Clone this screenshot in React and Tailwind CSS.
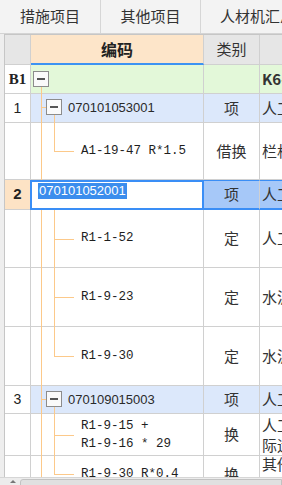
import React from 'react';

// 表格线与树线颜色
const grid = 'border-[#d0d0d0]';
const cjk = "font-['Noto_Sans_CJK_SC',sans-serif]";
const mono = "font-['Liberation_Mono','Noto_Sans_CJK_SC',monospace]";
const sans = "font-['Liberation_Sans','Noto_Sans_CJK_SC',sans-serif]";
const serif = "font-['Liberation_Serif','Noto_Sans_CJK_SC',serif]";

function Box({ className }) {
  return (
    <span className={`absolute w-[16px] h-[16px] border border-[#8c8c8c] bg-[#fafafa] flex items-center justify-center ${className}`}>
      <span className="w-[8px] h-[2px] bg-[#555]" />
    </span>
  );
}

function Line({ className }) {
  return <span className={`absolute bg-[#fcc98a] ${className}`} />;
}

function Row({ h, bg, head, headCls = '', code, codeCls = '', tree, type, typeCls = '', last, lastCls = '' }) {
  return (
    <div className={`flex shrink-0 ${h}`}>
      <div className={`w-[26px] shrink-0 border-r border-b ${grid} flex items-center justify-center text-[#222] ${headCls}`}>
        {head}
      </div>
      <div className={`relative w-[173px] shrink-0 border-r border-b ${grid} flex items-center ${bg} ${codeCls}`}>
        {tree}
        {code}
      </div>
      <div className={`w-[56px] shrink-0 border-r border-b ${grid} flex items-center justify-center text-[15px] text-[#333] ${cjk} ${bg} ${typeCls}`}>
        {type}
      </div>
      <div className={`flex-1 min-w-0 overflow-hidden border-b ${grid} flex items-center pl-[2px] whitespace-nowrap text-[15px] text-[#333] ${cjk} ${bg} ${lastCls}`}>
        {last}
      </div>
    </div>
  );
}

// 子目行的树线：├ 或 └
function SubTree({ end }) {
  return (
    <>
      <Line className="left-[10px] w-px top-0 bottom-[-1px]" />
      <Line className={end ? 'left-[23px] w-px top-0 h-1/2' : 'left-[23px] w-px top-0 bottom-[-1px]'} />
      <Line className="left-[23px] w-[20px] h-px top-1/2" />
    </>
  );
}

function ItemTree() {
  return (
    <>
      <Line className="left-[10px] w-px top-0 bottom-[-1px]" />
      <Line className="left-[10px] w-[5px] h-px top-[13px]" />
      <Box className="left-[15px] top-[5px]" />
      <Line className="left-[23px] w-px top-[21px] bottom-[-1px]" />
    </>
  );
}

const subCode = `pl-[50px] text-[12.5px] text-[#1e1e1e] ${mono}`;
const itemCode = `pl-[37px] text-[13px] text-[#2a2a2a] ${sans}`;

export default function App() {
  return (
    <div className="w-[282px] h-[485px] overflow-hidden bg-[#eeeeee] flex flex-col">
      {/* 页签 */}
      <div className={`h-[34px] shrink-0 flex bg-[#f3f3f3] border-b border-[#d4d4d4] text-[15px] text-[#333] ${cjk}`}>
        <div className="w-[101px] shrink-0 border-r border-[#d6d6d6] flex items-center justify-center">措施项目</div>
        <div className="w-[100px] shrink-0 border-r border-[#d6d6d6] flex items-center justify-center">其他项目</div>
        <div className="flex-1 min-w-0 overflow-hidden whitespace-nowrap flex items-center pl-[19px]">人材机汇总</div>
      </div>

      {/* 表格 */}
      <div className="ml-[4px] border-l border-t border-[#c6c6c6] flex-1 min-h-0 overflow-hidden bg-white flex flex-col">
        <div className="flex shrink-0 h-[30px]">
          <div className={`w-[26px] shrink-0 border-r border-b ${grid} bg-[#e6e6e6]`} />
          <div className={`w-[173px] shrink-0 border-r ${grid} border-b-2 border-b-[#3d93f2] bg-[#fde5c9] flex items-center justify-center text-[16px] font-bold text-[#222] ${cjk}`}>
            编码
          </div>
          <div className={`w-[56px] shrink-0 border-r border-b ${grid} bg-[#e6e6e6] flex items-center justify-center text-[15px] text-[#333] ${cjk}`}>
            类别
          </div>
          <div className={`flex-1 border-b ${grid} bg-[#e6e6e6]`} />
        </div>

        <Row
          h="h-[29px]"
          bg="bg-[#e3f8d9]"
          head="B1"
          headCls={`text-[15px] font-bold ${serif}`}
          tree={
            <>
              <Box className="left-[2px] top-[6px]" />
              <Line className="left-[10px] w-px top-[22px] bottom-[-1px]" />
            </>
          }
          last="K6-1 楼梯栏杆"
          lastCls={`text-[14px] font-bold ${serif}`}
        />

        <Row
          h="h-[29px]"
          bg="bg-[#dce8fb]"
          head="1"
          headCls={`text-[14px] ${sans}`}
          tree={<ItemTree />}
          code={<span className={itemCode}>070101053001</span>}
          type="项"
          last="人工挖土方"
        />

        <Row
          h="h-[57px]"
          bg="bg-white"
          tree={<SubTree end />}
          code={<span className={subCode}>A1-19-47 R*1.5</span>}
          type="借换"
          last="栏杆扶手"
        />

        {/* 编辑中的行 */}
        <div className="flex shrink-0 h-[30px]">
          <div className={`w-[25px] shrink-0 border-b ${grid} bg-[#fde3c5] flex items-center justify-center text-[15px] font-bold text-[#222] ${sans}`}>
            2
          </div>
          <div className="w-[174px] shrink-0 border-2 border-[#3a8ef6] bg-white flex items-start">
            <span className={`ml-[6px] mt-[1px] h-[16px] leading-[16px] px-px bg-[#3b8ded] text-white text-[13px] ${sans}`}>
              070101052001
            </span>
          </div>
          <div className={`w-[56px] shrink-0 border-r ${grid} border-t border-t-[#3a8ef6] border-b-2 border-b-[#3a8ef6] bg-[#a6c8f8] flex items-center justify-center text-[15px] text-[#333] ${cjk}`}>
            项
          </div>
          <div className={`flex-1 min-w-0 overflow-hidden whitespace-nowrap border-t border-t-[#3a8ef6] border-b-2 border-b-[#3a8ef6] bg-[#a6c8f8] flex items-center pl-[2px] text-[15px] text-[#333] ${cjk}`}>
            人工挖沟槽
          </div>
        </div>

        <Row
          h="h-[58px]"
          bg="bg-white"
          tree={<SubTree />}
          code={<span className={subCode}>R1-1-52</span>}
          type="定"
          last="人工挖沟槽"
        />
        <Row
          h="h-[59px]"
          bg="bg-white"
          tree={<SubTree />}
          code={<span className={subCode}>R1-9-23</span>}
          type="定"
          last="水泥砂浆"
        />
        <Row
          h="h-[59px]"
          bg="bg-white"
          tree={<SubTree end />}
          code={<span className={subCode}>R1-9-30</span>}
          type="定"
          last="水泥砂浆"
        />

        <Row
          h="h-[28px]"
          bg="bg-[#dce8fb]"
          head="3"
          headCls={`text-[14px] ${sans}`}
          tree={<ItemTree />}
          code={<span className={itemCode}>070109015003</span>}
          type="项"
          last="人工运土"
        />

        <Row
          h="h-[42px]"
          bg="bg-white"
          tree={<SubTree />}
          code={
            <span className={`${subCode} leading-[18px]`}>
              R1-9-15 +<br />R1-9-16 * 29
            </span>
          }
          type="换"
          last={
            <span className="leading-[20px]">
              人工运土<br />际运距
            </span>
          }
        />
        <Row
          h="h-[37px]"
          bg="bg-white"
          tree={<SubTree end />}
          code={<span className={subCode}>R1-9-30 R*0.4</span>}
          type="换"
          last={
            <span className="leading-[20px]">
              其他材料<br />费用
            </span>
          }
        />
      </div>

      {/* 横向滚动条 */}
      <div className="h-[8px] shrink-0 flex items-start bg-[#ececec] border-t border-[#d6d6d6]">
        <span className="ml-[10px] mt-[2px] w-0 h-0 border-x-[3px] border-x-transparent border-b-[3px] border-b-[#777]" />
        <span className="ml-[4px] mt-px flex-1 h-[10px] bg-[#e0e0e0] border border-[#c2c2c2] rounded-l-[3px]" />
      </div>
    </div>
  );
}
